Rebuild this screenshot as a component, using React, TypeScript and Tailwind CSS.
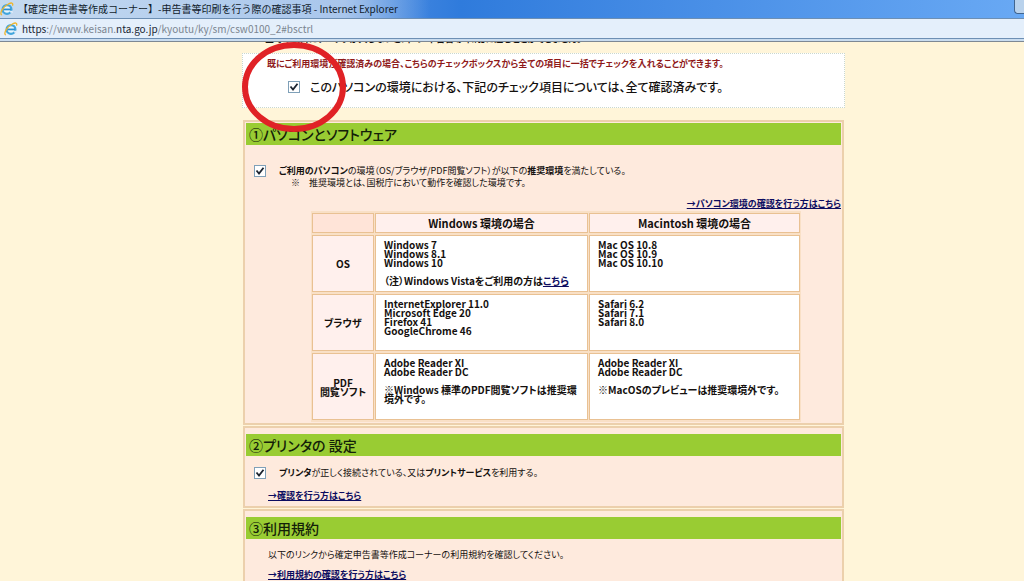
import type { ReactNode } from "react";

function IeIcon() {
  return (
    <svg viewBox="0 0 16 16" className="size-3.5 shrink-0" aria-hidden="true">
      <circle cx="8" cy="8.5" r="5" fill="#e8f6fd" stroke="#42a5dc" strokeWidth="2.6" />
      <path d="M4 8.5h8.5" stroke="#2f8fce" strokeWidth="2" />
      <path d="M11.5 10h3v2.5l-3-.5z" fill="#e3eefa" />
      <path d="M1.500 14.500C-.5 12 4 5 10 2c3-1.500 5-1 4.500 1.500" fill="none" stroke="#eeb52c" strokeWidth="1.500" strokeLinecap="round" />
    </svg>
  );
}

function Check({ id }: { id: string }) {
  return (
    <span className="relative grid size-3 shrink-0">
      <input id={id} type="checkbox" defaultChecked className="peer size-3 appearance-none border border-[#7fa0b8] bg-white" />
      <svg viewBox="0 0 12 12" className="pointer-events-none absolute inset-0 hidden size-3 peer-checked:block" aria-hidden="true">
        <path d="M2.500 5.500 5 8.500 9.500 2.800" fill="none" stroke="#1c2430" strokeWidth="1.800" />
      </svg>
    </span>
  );
}

function Section({ title, first = false, children }: { title: string; first?: boolean; children: ReactNode }) {
  return (
    <section className={`border-2 border-[#ecd0ac] bg-[#feeadd] px-px pb-px ${first ? "pt-px" : "pt-1.5"}`}>
      <h2 className="bg-[#99cc33] px-[3px] text-[14px] leading-[22px] font-medium text-[#132008]">{title}</h2>
      {children}
    </section>
  );
}

function Link({ children }: { children: ReactNode }) {
  return (
    <a href="#bsctrl" className="font-bold text-[#0c0c60] underline">
      {children}
    </a>
  );
}

const head = "border border-[#e9c193] bg-[#fff0ed] text-center text-[11px] leading-[18px] font-bold";
const rowHead = "border border-[#e9c193] bg-[#fff0ed] font-bold";
const cell = "border border-[#e9c193] bg-white px-2 pt-1 text-left align-top font-bold";

export default function App() {
  return (
    <div className="flex h-screen flex-col overflow-hidden bg-[#fff5d9] font-['Noto_Sans_CJK_JP',sans-serif] text-[9px] text-[#14100e] [font-feature-settings:'palt']">
      <header className="shrink-0 text-[10px] [font-feature-settings:normal]">
        <div className="flex h-[18px] items-center justify-between bg-linear-to-r from-[#a9c9ee] via-[#2f7bdc] via-45% to-[#69a9f4]">
          <div className="flex items-center gap-1 bg-linear-to-r from-[#c5daf0] via-[#a9c6ec] via-80% to-transparent pr-8 leading-[18px] text-[#111c2c]">
            <IeIcon />
            <h1>【確定申告書等作成コーナー】-申告書等印刷を行う際の確認事項 - Internet Explorer</h1>
          </div>
          <button aria-label="最小化" className="h-3.5 w-2.5 self-start rounded-bl-sm border-b border-l border-[#41658f] bg-[#b9d2ec]" />
        </div>
        <div className="flex h-[21px] items-center gap-1 border-y border-[#6d8fb4] bg-[#e4effb] px-1 leading-[18px]">
          <IeIcon />
          <span className="text-[#7b8590]">
            <span className="text-[#1b2735]">https</span>://www.keisan.<span className="text-[#1b2735]">nta.go.jp</span>/kyoutu/ky/sm/csw0100_2#bsctrl
          </span>
        </div>
        <div className="h-[3px] border-b border-[#7d8894] bg-[#c9dcef]" />
      </header>

      <main className="relative mr-[179px] ml-[242px] min-h-0 flex-1 overflow-hidden">
        <p className="-mt-[11px] h-[22px] pl-3 leading-[15px] font-bold">※ 全ての項目にチェックが入らないと、下の「申告書等印刷」に進むことができません。</p>

        <div className="mb-3 h-[55px] border border-dotted border-[#c9d8cf] bg-white">
          <p className="pl-6 leading-[20px] font-bold text-[#8f1a1a]">
            既にご利用環境が確認済みの場合、こちらのチェックボックスから全ての項目に一括でチェックを入れることができます。
          </p>
          <div className="flex items-center gap-2.5 pt-1 pl-[45px]">
            <Check id="all" />
            <label htmlFor="all" className="text-[12px] leading-[18px] font-medium">
              このパソコンの環境における、下記のチェック項目については、全て確認済みです。
            </label>
          </div>
        </div>

        <div className="mx-px flex flex-col gap-px">
          <Section first title="①パソコンとソフトウェア">
            <div className="flex gap-3 pt-5 pl-2">
              <Check id="pc" />
              <label htmlFor="pc" className="pl-px leading-3">
                <b>ご利用のパソコン</b>の環境（OS/ブラウザ/PDF閲覧ソフト）が以下の<b>推奨環境</b>を満たしている。
                <span className="block pl-3">※　推奨環境とは、国税庁において動作を確認した環境です。</span>
              </label>
            </div>
            <p className="pt-2 text-right leading-[14px]">
              <Link>→パソコン環境の確認を行う方はこちら</Link>
            </p>
            <table className="ml-[65px] w-[calc(100%-105px)] border-separate border-spacing-x-px border-spacing-y-0.5 bg-[#f9e0c6] text-[10px] leading-[9px]">
              <colgroup>
                <col className="w-[62px]" />
                <col />
                <col className="w-[211px]" />
              </colgroup>
              <thead>
                <tr>
                  <td className="border border-[#e9c193] bg-[#ffe4d8]" />
                  <th className={head}>Windows 環境の場合</th>
                  <th className={head}>Macintosh 環境の場合</th>
                </tr>
              </thead>
              <tbody>
                <tr className="h-[57px]">
                  <th className={rowHead}>OS</th>
                  <td className={cell}>
                    Windows 7<br />Windows 8.1<br />Windows 10<br /><br />
                    （注）Windows Vistaをご利用の方は<Link>こちら</Link>
                  </td>
                  <td className={cell}>Mac OS 10.8<br />Mac OS 10.9<br />Mac OS 10.10</td>
                </tr>
                <tr className="h-[57px]">
                  <th className={rowHead}>ブラウザ</th>
                  <td className={cell}>InternetExplorer 11.0<br />Microsoft Edge 20<br />Firefox 41<br />GoogleChrome 46</td>
                  <td className={cell}>Safari 6.2<br />Safari 7.1<br />Safari 8.0</td>
                </tr>
                <tr className="h-[67px]">
                  <th className={rowHead}>PDF<br />閲覧ソフト</th>
                  <td className={cell}>
                    Adobe Reader XI<br />Adobe Reader DC<br /><br />
                    ※Windows 標準のPDF閲覧ソフトは推奨環境外です。
                  </td>
                  <td className={cell}>
                    Adobe Reader XI<br />Adobe Reader DC<br /><br />
                    ※MacOSのプレビューは推奨環境外です。
                  </td>
                </tr>
              </tbody>
            </table>
          </Section>

          <Section title="②プリンタの 設定">
            <div className="flex gap-3 pt-[11px] pl-2">
              <Check id="printer" />
              <label htmlFor="printer" className="pl-px leading-3">
                <b>プリンタ</b>が正しく接続されている、又は<b>プリントサービス</b>を利用する。
              </label>
            </div>
            <p className="pt-[9px] pb-px pl-[22px] leading-4">
              <Link>→確認を行う方はこちら</Link>
            </p>
          </Section>

          <Section title="③利用規約">
            <p className="pt-2 pl-[22px] leading-4">以下のリンクから確定申告書等作成コーナーの利用規約を確認してください。</p>
            <p className="pt-1 pb-4 pl-[22px] leading-4">
              <Link>→利用規約の確認を行う方はこちら</Link>
            </p>
          </Section>
        </div>

        <svg viewBox="0 0 106 92" className="pointer-events-none absolute top-0 -left-px h-[92px] w-[106px]" aria-hidden="true">
          <ellipse cx="53" cy="45" rx="49" ry="42" fill="none" stroke="#e02226" strokeWidth="6" />
        </svg>
      </main>
    </div>
  );
}
